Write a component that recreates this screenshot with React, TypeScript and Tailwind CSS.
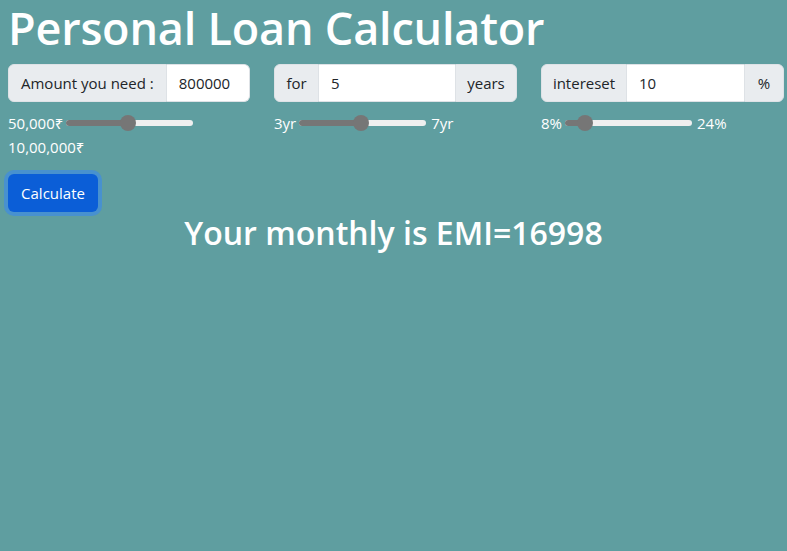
import React from "react";

function Slider({ left, right, pos, wrap }: { left: string; right: string; pos: number; wrap?: boolean }) {
  return (
    <div className="text-[15px] leading-6 text-white">
      <span>{left}</span>
      <span className="relative ml-[3px] mr-[5px] inline-block h-[16px] w-[127px] align-[-2px]">
        <span className="absolute left-0 right-0 top-[5px] h-[6px] rounded-full bg-[#efefef]" />
        <span className="absolute left-0 top-[5px] h-[6px] rounded-full bg-[#767676]" style={{ width: pos + 2 }} />
        <span className="absolute top-0 h-[16px] w-[16px] rounded-full bg-[#767676]" style={{ left: pos - 8 }} />
      </span>
      {wrap ? <br /> : null}
      <span>{right}</span>
    </div>
  );
}

export default function App() {
  const font = { fontFamily: '"Open Sans", "Noto Sans", sans-serif' };
  return (
    <div className="min-h-[551px] w-full bg-[#5f9ea0] px-[8px] pt-px text-[#212529]" style={font}>
      <h1 className="-mt-[4px] text-[45px] font-semibold leading-[61px] text-white tracking-[-0.2px]">
        Personal Loan Calculator
      </h1>
      <div className="mt-[6px] grid grid-cols-[242px_243px_243px] gap-x-[24px]">
        <div>
          <div className="flex h-[38px] text-[15px]">
            <span className="flex items-center rounded-l-[6px] border border-[#dee2e6] bg-[#e9ecef] px-[12px]">Amount you need :</span>
            <span className="flex flex-1 items-center rounded-r-[6px] border border-l-0 border-[#dee2e6] bg-white px-[12px]">800000</span>
          </div>
          <div className="mt-[9px]">
            <Slider left="50,000₹" right="10,00,000₹" pos={62} wrap />
          </div>
        </div>
        <div>
          <div className="flex h-[38px] text-[15px]">
            <span className="flex w-[45px] items-center justify-center rounded-l-[6px] border border-[#dee2e6] bg-[#e9ecef]">for</span>
            <span className="flex flex-1 items-center border-y border-[#dee2e6] bg-white px-[12px]">5</span>
            <span className="flex w-[62px] items-center justify-center rounded-r-[6px] border border-[#dee2e6] bg-[#e9ecef]">years</span>
          </div>
          <div className="mt-[9px]">
            <Slider left="3yr" right="7yr" pos={62} />
          </div>
        </div>
        <div>
          <div className="flex h-[38px] text-[15px]">
            <span className="flex w-[86px] items-center justify-center rounded-l-[6px] border border-[#dee2e6] bg-[#e9ecef]">intereset</span>
            <span className="flex flex-1 items-center border-y border-[#dee2e6] bg-white px-[12px]">10</span>
            <span className="flex w-[40px] items-center justify-center rounded-r-[6px] border border-[#dee2e6] bg-[#e9ecef]">%</span>
          </div>
          <div className="mt-[9px]">
            <Slider left="8%" right="24%" pos={20} />
          </div>
        </div>
      </div>
      <div className="mt-[15px]">
        <button className="h-[38px] w-[90px] rounded-[6px] bg-[#0b5ed7] text-[15px] text-white shadow-[0_0_0_4px_rgba(49,132,253,0.5)]">
          Calculate
        </button>
      </div>
      <h2 className="mt-[2px] text-center text-[32px] font-semibold leading-[38px] text-white">
        Your monthly is EMI=16998
      </h2>
    </div>
  );
}
